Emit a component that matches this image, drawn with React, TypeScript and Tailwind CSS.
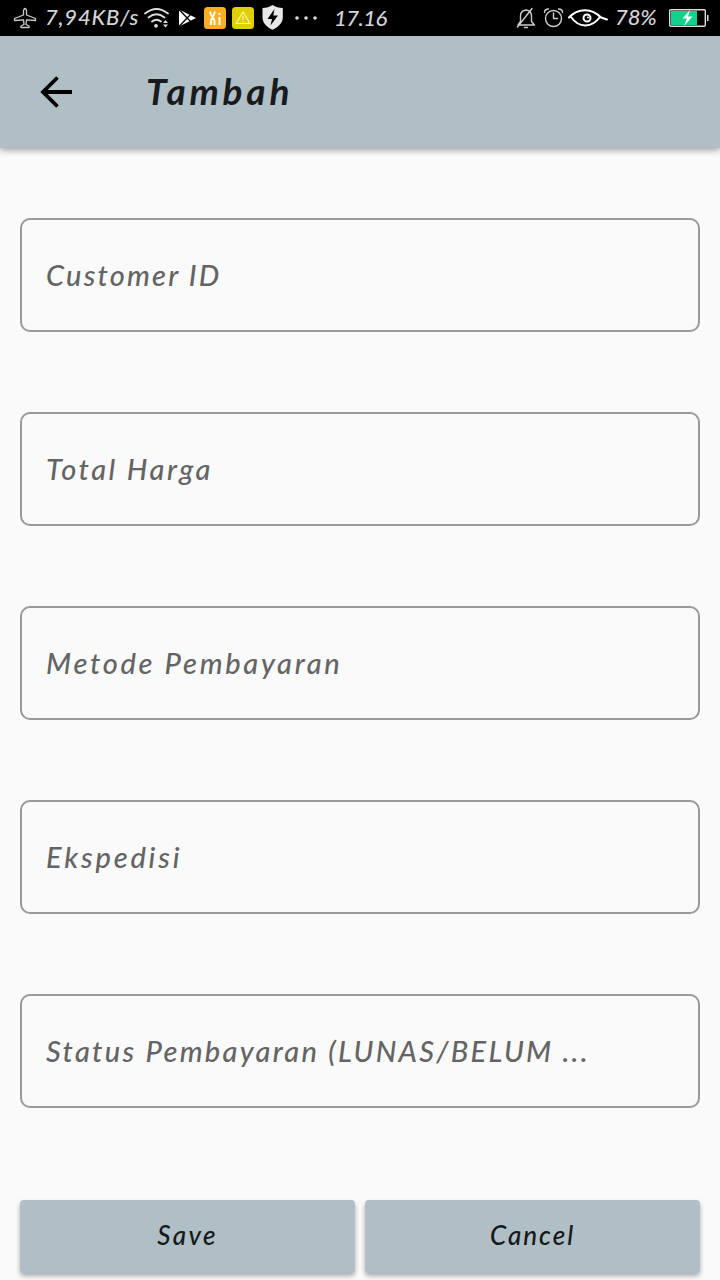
const fields = [
  { label: "Customer ID", style: "tracking-[2.2px]" },
  { label: "Total Harga", style: "tracking-[2.5px]" },
  { label: "Metode Pembayaran", style: "tracking-[2.7px]" },
  { label: "Ekspedisi", style: "tracking-[2.8px]" },
  { label: "Status Pembayaran (LUNAS/BELUM ...", style: "tracking-[2.3px]" },
];

function LeftIcons() {
  return (
    <svg className="ml-1 h-9 w-[180px] shrink-0" viewBox="142 0 180 36" fill="none">
      <g stroke="#ddd" strokeWidth="1.8" strokeLinecap="round">
        <path d="M145 13.500Q156.500 4.500 168 13.500M148.500 17.500Q156.500 11 164.500 17.500M152 21.500Q156.500 18 161 21.500" />
      </g>
      <circle cx="156" cy="25.800" r="1.900" fill="#ddd" />
      <path d="M163 23L165.500 20L168 23ZM163 24.500H168L165.500 27.500Z" fill="#ddd" />
      <path d="M179 9.500L196 18L179 26.500Z" fill="#fff" />
      <path d="M179 9.500L191 22M179 26.500L191 14" stroke="#000" strokeWidth="1.300" />
      <rect x="204" y="7" width="22" height="22" rx="3.500" fill="#fdae22" />
      <path d="M210 11.500L211 15L214.500 20.500V25M215 11.500L213.500 15.500L211 20.500V25M219.500 17V25M219.500 13V15" stroke="#fff" strokeWidth="1.900" />
      <rect x="232" y="7" width="22" height="22" rx="3.500" fill="#e0d000" />
      <path d="M243 12L250 23.500H236ZM243 16V20M243 21V22.300" stroke="#fff8b0" strokeWidth="1.100" strokeLinejoin="round" />
      <path d="M272.500 5C269.500 7 266.500 8 262.500 8V17C262.500 23 266.500 27 272.500 29.800C278.500 27 282.800 23 282.800 17V8C279 8 275.500 7 272.500 5Z" fill="#e8e8e8" />
      <path d="M274.500 9L267.500 19H272L270.500 25.500L278 15.500H273.300Z" fill="#000" />
      <g fill="#ddd"><circle cx="297" cy="18" r="1.800" /><circle cx="306" cy="18" r="1.800" /><circle cx="315" cy="18" r="1.800" /></g>
    </svg>
  );
}

function RightIcons() {
  return (
    <svg className="h-9 w-[94px] shrink-0" viewBox="515 0 94 36" fill="none">
      <g stroke="#ccc" strokeWidth="1.400" strokeLinecap="round" strokeLinejoin="round">
        <path d="M518 25H534.500L531.500 21.500V16C531.500 12.500 529.500 10.500 526 10C522.500 10.500 520.500 12.500 520.500 16V21.500ZM524.500 27.500H527.500M517.500 27L532 8.500" />
        <circle cx="553.500" cy="18.500" r="8" />
        <path d="M553.500 13V18.500H557.500M544.500 12.500Q544.500 9 548.500 9M558.500 9Q562.500 9 562.500 12.500" />
      </g>
      <path d="M569 17.500C578 7.500 592 8 601 17.500M571 17C579 28.500 592 28 600 17C602 18 604 18.500 607 19.500" stroke="#fff" strokeWidth="2" strokeLinecap="round" />
      <circle cx="587" cy="18" r="3.500" stroke="#fff" strokeWidth="2" />
      <circle cx="588" cy="17.500" r="1" fill="#fff" />
    </svg>
  );
}

function Battery() {
  return (
    <svg className="h-9 w-[42px] shrink-0" viewBox="668 0 42 36" fill="none">
      <rect x="669.700" y="9.700" width="35.600" height="16.600" rx="1" stroke="#ddd" strokeWidth="1.400" />
      <path d="M671 11H697V25H671Z" fill="#12d18a" />
      <path d="M707 15H708.500V21H707Z" fill="#ddd" />
      <path d="M690 10L682.500 18.500H687L684 26L692.500 16.500H688Z" fill="#fff" />
    </svg>
  );
}

export default function App() {
  return (
    <div className="flex h-[1280px] w-[720px] flex-col overflow-hidden bg-[#fafafa] font-['Lato','Open_Sans',sans-serif] italic">
      <div className="flex h-9 shrink-0 items-center bg-black text-[22px] leading-9 text-[#d4d4d4]">
        <svg className="ml-3 h-9 w-[26px] shrink-0" viewBox="12 0 26 36" fill="none" stroke="#ccc" strokeWidth="1.300" strokeLinejoin="round">
          <path d="M23.500 15V10.500Q25 6.500 26.500 10.500V15L35.500 18.500V20.500L26.500 19.800L26 24.500L29 26V27.500H21V26L24 24.500L23.500 19.800L14.500 20.500V18.500Z" />
        </svg>
        <span className="-mt-0.5 ml-[7px] w-[93px] whitespace-nowrap font-medium tracking-[0.8px]">7,94KB/s</span>
        <LeftIcons />
        <span className="ml-3 w-[60px] whitespace-nowrap font-medium tracking-[-0.5px]">17.16</span>
        <span className="grow" />
        <RightIcons />
        <span className="-mt-0.5 ml-1.5 w-[53px] whitespace-nowrap font-medium tracking-[-0.1px]">78%</span>
        <Battery />
        <span className="w-2.5" />
      </div>
      <header className="z-10 flex h-28 shrink-0 items-center bg-[#b0bec5] shadow-[0_2px_7px_rgba(0,0,0,0.38)]">
        <svg className="ml-10 h-8 w-8" viewBox="0 0 32 32" fill="none" stroke="#000" strokeWidth="3.800">
          <path d="M17.500 1.500L3 16L17.500 30.500M2.500 16H32" />
        </svg>
        <h1 className="-mt-0.5 ml-[74px] text-[37px] font-bold leading-[110px] tracking-[3.8px] text-[#171b1d]">Tambah</h1>
      </header>
      <main className="flex grow flex-col px-5 pt-[70px]">
        <div className="flex flex-col gap-20">
          {fields.map((field) => (
            <div key={field.label} className="flex h-[114px] items-center rounded-[10px] border-2 border-[#999] px-6">
              <span className={`whitespace-nowrap text-[29px] font-medium leading-9 text-[#646464] ${field.style}`}>{field.label}</span>
            </div>
          ))}
        </div>
        <div className="mt-[92px] grid grid-cols-2 gap-2.5">
          <button className="h-[73px] rounded-[4px] bg-[#b0bec5] pb-0.5 text-[26px] font-medium italic tracking-[2.3px] text-[#15191b] shadow-[0_3px_5px_rgba(0,0,0,0.32)]">Save</button>
          <button className="h-[73px] rounded-[4px] bg-[#b0bec5] pb-0.5 text-[26px] font-medium italic tracking-[2px] text-[#15191b] shadow-[0_3px_5px_rgba(0,0,0,0.32)]">Cancel</button>
        </div>
      </main>
    </div>
  );
}
